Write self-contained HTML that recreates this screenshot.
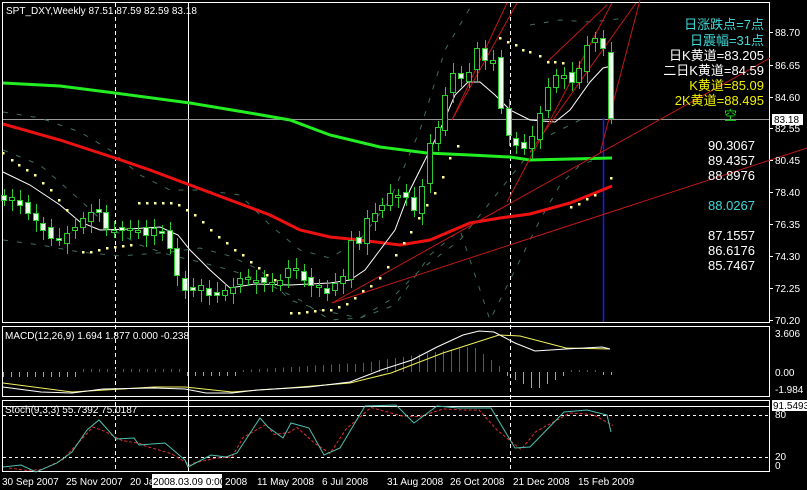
<!DOCTYPE html>
<html><head><meta charset="utf-8"><style>
html,body{margin:0;padding:0;background:#000;width:807px;height:490px;overflow:hidden}
svg{display:block}
text{font-family:"Liberation Sans","Noto Sans CJK SC",sans-serif;font-size:10px;fill:#fff}
.cj{font-size:13px}
</style></head><body>
<svg id="s" width="807" height="490" viewBox="0 0 807 490" xmlns="http://www.w3.org/2000/svg">
<rect width="807" height="490" fill="#000"/>
<rect x="2.5" y="2.5" width="767" height="320" fill="none" stroke="#fff"/>
<rect x="2.5" y="326.5" width="767" height="70" fill="none" stroke="#fff"/>
<rect x="2.5" y="400.5" width="767" height="71" fill="none" stroke="#fff"/>
<line x1="115.5" y1="3" x2="115.5" y2="471" stroke="#fff" stroke-dasharray="4,3"/>
<line x1="510.5" y1="3" x2="510.5" y2="471" stroke="#fff" stroke-dasharray="4,3"/>
<line x1="188.5" y1="3" x2="188.5" y2="471" stroke="#fff"/>
<line x1="3" y1="119.5" x2="769" y2="119.5" stroke="#999"/>
<line x1="603.5" y1="118" x2="603.5" y2="322" stroke="#1a1aff" stroke-width="1.5"/>
<line x1="3" y1="415.5" x2="769" y2="415.5" stroke="#fff" stroke-dasharray="3,3"/>
<line x1="3" y1="457.5" x2="769" y2="457.5" stroke="#fff" stroke-dasharray="3,3"/>
<line x1="3" y1="406.5" x2="769" y2="406.5" stroke="#fff"/>
<g id="g"></g>
<text x="6" y="14">SPT_DXY,Weekly  87.51 87.59 82.59 83.18</text>
<text x="5" y="339" font-size="9.5">MACD(12,26,9) 1.694 1.877 0.000 -0.238</text>
<text x="5" y="413" font-size="9.5">Stoch(9,3,3) 55.7392 75.0187</text>
<g text-anchor="end">
<text class="cj" x="764" y="29" style="fill:#40d8d8">日涨跌点=7点</text>
<text class="cj" x="764" y="45" style="fill:#40d8d8">日震幅=31点</text>
<text class="cj" x="764" y="60">日K黄道=83.205</text>
<text class="cj" x="764" y="75">二日K黄道=84.59</text>
<text class="cj" x="764" y="90" style="fill:#f0f000">K黄道=85.09</text>
<text class="cj" x="764" y="105" style="fill:#f0f000">2K黄道=88.495</text>
<text class="cj" x="737" y="120" style="fill:#20d020">空</text>
<text class="cj" x="755" y="150">90.3067</text>
<text class="cj" x="755" y="165">89.4357</text>
<text class="cj" x="755" y="180">88.8976</text>
<text class="cj" x="755" y="210" style="fill:#40d8d8">88.0267</text>
<text class="cj" x="755" y="240">87.1557</text>
<text class="cj" x="755" y="255">86.6176</text>
<text class="cj" x="755" y="270">85.7467</text>
</g>
<g id="ax"></g>
<rect x="772" y="114" width="31" height="11" fill="#fff"/>
<text x="774" y="123" style="fill:#000">83.18</text>
<text x="775" y="337">3.606</text>
<text x="775" y="376">0.00</text>
<text x="775" y="393">-1.984</text>
<rect x="772" y="400" width="35" height="11" fill="#fff"/>
<text x="773" y="409" style="fill:#000">91.5493</text>
<text x="775" y="418">80</text>
<text x="775" y="460">20</text>
<text x="775" y="469">0</text>
<g>
<text x="2" y="485">30 Sep 2007</text>
<text x="66" y="485">25 Nov 2007</text>
<text x="130" y="485">20 Ja</text>
<text x="225" y="485">2008</text>
<text x="257" y="485">11 May 2008</text>
<text x="322" y="485">6 Jul 2008</text>
<text x="387" y="485">31 Aug 2008</text>
<text x="450" y="485">26 Oct 2008</text>
<text x="513" y="485">21 Dec 2008</text>
<text x="578" y="485">15 Feb 2009</text>
</g>
<rect x="152" y="474" width="70" height="14" fill="#fff"/>
<text x="153" y="485" style="fill:#000">2008.03.09 0:00</text>
</svg>
<script>
(function(){
var g=document.getElementById('g'),NS='http://www.w3.org/2000/svg';
function el(t,a){var e=document.createElementNS(NS,t);for(var k in a)e.setAttribute(k,a[k]);g.appendChild(e);return e;}
function pl(pts,c,w,d){el('polyline',{points:pts.map(function(p){return p.join(',')}).join(' '),fill:'none',stroke:c,'stroke-width':w||1,'stroke-dasharray':d||'none'});}
var ax=document.getElementById('ax');
[[88.70,32],[86.65,65],[84.60,97],[82.55,128],[80.45,160],[78.40,192],[76.35,224],[74.30,256],[72.25,288],[70.20,320]].forEach(function(a){
 var t=document.createElementNS(NS,'text');t.setAttribute('x',775);t.setAttribute('y',a[1]+4);t.textContent=a[0].toFixed(2);ax.appendChild(t);
 var l=document.createElementNS(NS,'line');l.setAttribute('x1',770);l.setAttribute('x2',773);l.setAttribute('y1',a[1]+.5);l.setAttribute('y2',a[1]+.5);l.setAttribute('stroke','#fff');ax.appendChild(l);});
var dc='#3f6f5a',dd='5,9';
pl([[3,112],[40,118],[80,132],[110,150],[140,175],[170,190],[200,190],[240,195],[270,225],[300,250],[330,258],[360,240],[390,200],[420,130],[445,50],[470,8]],dc,1,dd);
pl([[3,150],[40,165],[80,200],[110,228],[140,245],[170,255],[200,262],[230,270],[260,280],[300,300],[330,320],[360,318],[390,300],[420,270],[460,240],[500,190],[540,140],[580,120]],dc,1,dd);
pl([[3,240],[40,245],[80,252],[120,256],[170,252],[200,248],[230,256],[260,270],[290,300],[320,310],[360,318],[395,305],[430,255],[460,230],[490,320],[520,260],[540,220],[560,185],[580,165],[600,158]],dc,1,dd);
pl([[530,25],[560,20],[590,22],[610,20],[625,18]],dc,1,dd);
pl([[3,83],[60,86],[115,93],[190,103],[250,113],[290,120],[330,135],[380,147],[427,153],[470,155],[510,157],[530,160],[612,158]],'#22ee22',3);
pl([[3,124],[60,140],[115,158],[150,170],[190,185],[230,200],[270,215],[300,230],[330,237],[360,240],[400,245],[430,240],[470,223],[500,218],[530,214],[570,203],[595,193],[612,186]],'#ee1111',3);
pl([[3,172],[30,185],[60,205],[80,222],[100,230],[130,229],[160,227],[178,235],[190,250],[210,270],[230,288],[255,284],[290,285],[330,283],[350,280],[365,270],[380,250],[395,230],[410,190],[425,160],[440,130],[455,95],[468,82],[480,82],[495,95],[510,110],[530,120],[555,122],[570,110],[590,82],[603,68],[612,66]],'#fff',1);
[[332,303,770,58],[332,303,807,148],[507,202,612,3],[452,120,507,3],[453,118,517,3],[530,152,636,3],[547,62,607,5],[600,153,640,0]].forEach(function(l){el('line',{x1:l[0],y1:l[1],x2:l[2],y2:l[3],stroke:'#c01818','stroke-width':1});});
var cl=[200,197,205,213,220,230,238,240,233,227,218,212,212,228,230,230,228,230,235,228,233,248,275,290,290,285,295,295,290,287,278,277,280,282,282,280,268,268,280,285,285,293,283,276,240,243,218,213,205,193,195,197,210,186,143,127,95,73,78,72,48,60,60,108,135,145,148,136,113,87,75,75,82,68,45,38,48,118];
var n=cl.length;
for(var i=0;i<n;i++){
 var c=cl[i],o=i?cl[i-1]+((i%3)-1)*3:195; if(i==n-1)o=52;
 var t0=Math.min(o,c),b0=Math.max(o,c);if(b0-t0<2)b0=t0+2;
 var x=Math.round(4+i*(607/(n-1)));
 el('line',{x1:x+.5,y1:t0-6-(i*7%5),x2:x+.5,y2:b0+6+(i*5%7),stroke:'#2ecc2e'});
 el('rect',{x:x-2.5,y:t0+.5,width:5,height:b0-t0,fill:c>o?'#e8ffe8':'#000',stroke:'#2ecc2e'});
}
var sar=[[3,153],[12,160],[19,165],[27,170],[35,175],[43,183],[51,190],[59,200],[67,210],[83,252],[91,252],[99,250],[107,248],[115,247],[123,246],[131,245],[139,203],[147,203],[155,203],[163,203],[171,203],[179,205],[187,210],[195,215],[203,222],[211,230],[219,237],[227,243],[235,250],[243,255],[251,262],[259,268],[267,275],[275,280],[291,313],[299,313],[307,312],[315,311],[323,310],[331,310],[339,307],[347,304],[355,298],[363,291],[371,286],[380,278],[388,267],[396,255],[404,243],[411,232],[419,218],[427,205],[435,193],[443,177],[450,158],[458,146],[500,38],[508,42],[516,45],[523,50],[530,52],[540,56],[548,62],[555,62],[563,63],[571,207],[579,204],[587,199],[595,195],[611,178]];
sar.forEach(function(p){el('rect',{x:p[0]-1,y:p[1]-1,width:2.5,height:2.5,fill:'#ffff99'});});
for(var i=0;i<77;i++){var x=3+i*8,h,col;
 if(i<10){h=-5;col='#40d0d0'}else if(i<23){h=3;col='#e02020'}else if(i<30){h=-4;col='#40d0d0'}else if(i<44){h=2+(i-30)*0.5;col='#e02020'}
 else if(i<63){h=8+(i-44)*1.2;if(i>58)h=30-(i-58)*6;col='#e02020'}else if(i<71){h=-(i<67?(i-62)*4:(71-i)*4);col='#40d0d0'}else if(i<75){h=2;col='#e02020'}else{h=-3;col='#40d0d0'}
 if(h>0)el('rect',{x:x,y:372-h,width:1,height:h,fill:col});else if(h<0)el('rect',{x:x,y:372,width:1,height:-h,fill:col});}
pl([[3,383],[72,392],[154,387],[185,387],[232,392],[288,388],[350,383],[391,373],[443,353],[499,335],[520,336],[566,348],[610,349]],'#f0f060',1);
pl([[3,387],[41,392],[72,393],[103,389],[154,388],[185,389],[206,393],[232,393],[257,390],[309,387],[350,382],[381,370],[412,360],[437,347],[463,335],[479,331],[494,332],[515,343],[535,351],[566,349],[602,347],[610,349]],'#fff',1);
var st=[[3,467],[21,465],[36,472],[57,463],[72,452],[87,430],[99,420],[116,439],[134,438],[139,445],[165,443],[185,460],[188,467],[211,455],[226,457],[237,453],[260,418],[268,427],[283,438],[291,423],[309,428],[324,455],[340,448],[365,406],[396,405],[414,423],[437,406],[458,408],[473,408],[491,408],[515,448],[530,447],[564,412],[587,410],[607,415],[611,432]];
var rd=[];for(var i=0;i<st.length-1;i++){rd.push([st[i][0]+6,(st[i][1]+st[i+1][1])/2+2]);}
pl(rd,'#e03030',1,'3,2');
pl(st,'#50c0b0',1);
})();
</script>
</body></html>
